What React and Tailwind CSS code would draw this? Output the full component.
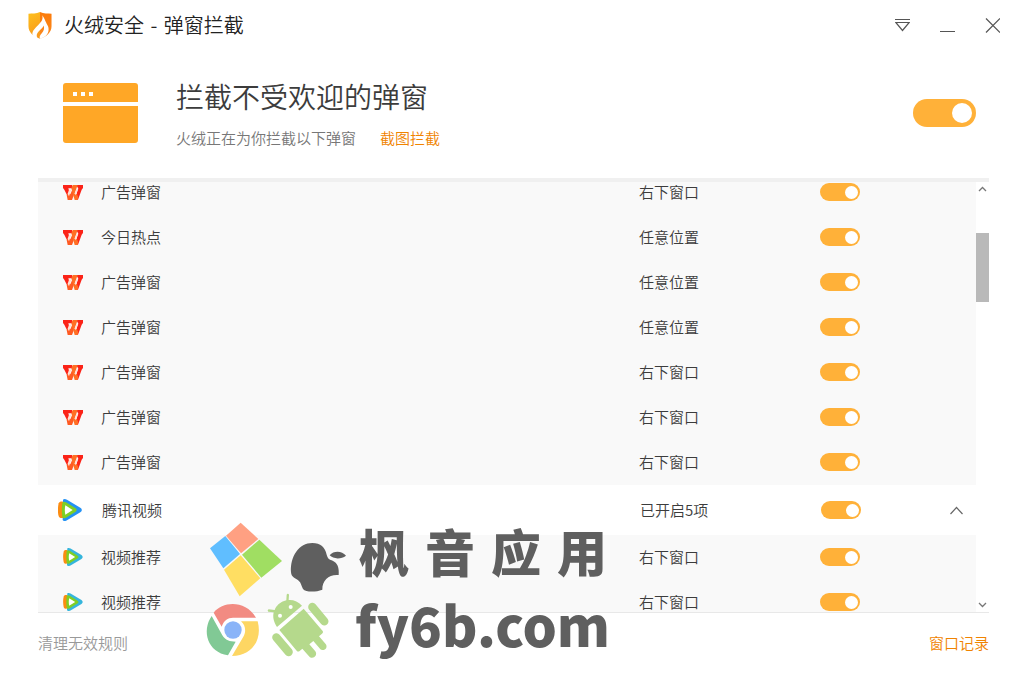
import { useState } from "react";

const Shield = () => (
  <svg viewBox="0 0 72 82" className="h-[27px] w-6 shrink-0" aria-hidden="true">
    <defs>
      <linearGradient id="shieldLeft" x1="0" y1="0" x2="0.3" y2="1">
        <stop offset="0" stopColor="#fdc11d" />
        <stop offset="1" stopColor="#f99a1c" />
      </linearGradient>
      <linearGradient id="shieldRight" x1="0" y1="0" x2="0" y2="1">
        <stop offset="0" stopColor="#fb7a0a" />
        <stop offset="1" stopColor="#fb8a1e" />
      </linearGradient>
    </defs>
    <path d="M36 0C25 5 12 5 1 5v38c0 19 15 31 35 38z" fill="url(#shieldLeft)" />
    <path d="M36 0c11 5 24 5 35 5v38c0 19-15 31-35 38z" fill="url(#shieldRight)" />
    <path d="M43 10c3 14-3 20-13 30-11 11-18 18-17 28 2 6 9 11 16 13-5-9-4-15 4-23 7-7 12-11 14-17 3 9 1 16-5 23-6 7-9 11-6 18 14-4 25-13 26-27 1-11-4-14-7-22-4-8-6-15-12-23z" fill="#fff" />
  </svg>
);

const WindowIcon = () => (
  <svg viewBox="0 0 75 60" className="h-[60px] w-[75px] shrink-0" fill="#ffa726" aria-hidden="true">
    <path d="M3 0h69a3 3 0 0 1 3 3v16H0V3a3 3 0 0 1 3-3z" />
    <path d="M0 23h75v34a3 3 0 0 1-3 3H3a3 3 0 0 1-3-3z" />
    <path d="M10 9h4v4h-4zM18 9h4v4h-4zM26 9h4v4h-4z" fill="#fff" />
  </svg>
);

const WpsIcon = () => (
  <svg viewBox="0 0 60 45" className="h-[15px] w-5" aria-hidden="true">
    <path d="M0 0h27v10H16l6 20-4 12L4 14l-4-5z" fill="#fb2318" />
    <path d="M40 0h20v9l-4 5-11 30h-7l4-22 4-11z" fill="#fb2318" />
    <path d="M22 28l8-19h8l-2 12-9 24H14l-3-15 6-8z" fill="#ff5a22" />
    <path d="M29 0h15l-4 11-5 14 7 3 4 9-3 8h-8l-6-22-4-13z" fill="#ff6f24" />
    <path d="M18 14h7l-7 20-4-8z" fill="#ffe0d4" />
    <path d="M40 13h5l-7 18-3-6z" fill="#ffe0d4" />
  </svg>
);

const TencentIcon = ({ small }) => (
  <svg viewBox="0 0 72 66" className={small ? "h-[18px] w-5" : "h-[22px] w-6"} aria-hidden="true">
    <path d="M15 2c3-3 8-2 12 0l40 24c6 4 6 10 0 14L27 64c-5 3-10 3-13-1z" fill={small ? "#35b5dc" : "#2492f5"} />
    <path d="M2 13c2-5 7-6 13-5v49c-6 1-11 0-13-5-3-11-3-28 0-39z" fill="#fb8c12" />
    <path d="M13 12c2-5 6-5 11-2l29 18c4 3 4 7 0 10L24 56c-5 3-9 3-11-2-2-12-2-30 0-42z" fill="#7fce25" />
    <path d="M22 19l22 14-22 14c-2-8-2-20 0-28z" fill="#fff" />
  </svg>
);

const Toggle = ({ label, large }) => (
  <input
    type="checkbox"
    role="switch"
    defaultChecked
    aria-label={label}
    className={
      large
        ? "flex h-7 w-[63px] shrink-0 cursor-pointer appearance-none items-center rounded-full bg-[#cccccc] px-1 before:size-5 before:rounded-full before:bg-white checked:justify-end checked:bg-[#ffb139]"
        : "flex h-[18px] w-10 shrink-0 cursor-pointer appearance-none items-center rounded-full bg-[#cccccc] px-0.5 before:size-[13px] before:rounded-full before:bg-white checked:justify-end checked:bg-[#ffb139]"
    }
  />
);

const RuleRow = ({ icon, name, position }) => (
  <li className="grid h-[45px] shrink-0 grid-cols-[63px_1fr_181px_156px] items-center bg-[#f9f9f9] pb-px">
    <span className="pl-[25px]">{icon}</span>
    <span>{name}</span>
    <span>{position}</span>
    <Toggle label={name} />
  </li>
);

const Logos = () => (
  <svg viewBox="0 0 480 450" className="h-[150px] w-40 shrink-0" aria-hidden="true">
    <g>
      <path d="M137 23l53 49-52 43-45-53z" fill="#ffa082" />
      <path d="M91 63l44 54-50 43-40-60z" fill="#60beff" />
      <path d="M193 74l68 64-62 50-58-69z" fill="#a0de62" />
      <path d="M137 121l59 69-62 54-47-80z" fill="#ffde62" />
    </g>
    <g fill="#5f5f5f">
      <path d="M352 84c25 0 38 13 43 35 3 12 9 15 18 18 14 6 20 20 18 43-28-3-50 15-49 44-20 8-50 8-58-2-5-9-5-18-13-25-9-7-22-9-23-25-3-48 24-88 64-88z" />
      <path d="M404 121c12-14 36-14 49 1-14 11-38 11-49-1z" />
    </g>
    <g>
      <path d="M56 293c28-35 95-38 127 15h-69c-16 0-28 9-34 27z" fill="#f28b82" />
      <path d="M50 303l32 58c9 15 22 19 40 19l-23 41c-61-9-80-73-49-118z" fill="#81c995" />
      <path d="M138 319h50c15 55-17 103-77 104l34-58c9-15 7-34-7-46z" fill="#fdd663" />
      <circle cx="114" cy="345" r="26" fill="#8ab4f8" />
    </g>
    <g fill="#b5d98c">
      <path d="M246 336c-11-16-13-31-10-44l-16-2c-3-2-2-6 1-7l18 2c5-13 16-24 35-29l1-17c1-4 6-4 7 0l-1 16c15-1 29 5 40 17z" />
      <path d="M253 345l73-64 57 67c2 3 1 6-3 9l-8 7 20 23c9 12-7 25-17 14l-20-23-12 10 18 21c9 13-9 27-19 15l-20-23-8 7c-4 3-6 2-9-1z" />
      <path d="M244 367l37 44" fill="none" stroke="#b5d98c" strokeWidth="25" strokeLinecap="round" />
      <path d="M352 276l36 43" fill="none" stroke="#b5d98c" strokeWidth="25" strokeLinecap="round" />
      <circle cx="255" cy="302" r="6" fill="#fff" />
      <circle cx="287" cy="276" r="6" fill="#fff" />
    </g>
  </svg>
);

const rules = [
  { name: "广告弹窗", position: "右下窗口" },
  { name: "今日热点", position: "任意位置" },
  { name: "广告弹窗", position: "任意位置" },
  { name: "广告弹窗", position: "任意位置" },
  { name: "广告弹窗", position: "右下窗口" },
  { name: "广告弹窗", position: "右下窗口" },
  { name: "广告弹窗", position: "右下窗口" },
];

const videoRules = [
  { name: "视频推荐", position: "右下窗口" },
  { name: "视频推荐", position: "右下窗口" },
];

const App = () => {
  const [open, setOpen] = useState(true);

  return (
    <div className="relative flex h-screen flex-col bg-white font-['Noto_Sans_CJK_SC',sans-serif] text-[15px] font-[350] text-[#3c3c3c]">
      <header className="flex h-[50px] shrink-0 items-center justify-between pr-[27px] pl-7">
        <div className="flex items-center gap-3">
          <Shield />
          <h1 className="text-xl leading-7 text-[#222222]">
            火绒安全 <span className="mx-0.5">-</span> 弹窗拦截
          </h1>
        </div>
        <div className="flex items-center gap-[30px] text-[#555555]">
          <button type="button" aria-label="菜单">
            <svg viewBox="0 0 15 15" className="size-[15px]" fill="none" stroke="currentColor" strokeWidth="1.2">
              <path d="M0 1.5h15M0.8 4.5h13.4L7.5 12.5z" />
            </svg>
          </button>
          <button type="button" aria-label="最小化">
            <svg viewBox="0 0 15 15" className="size-[15px]" fill="none" stroke="currentColor">
              <path d="M0 13.5h15" />
            </svg>
          </button>
          <button type="button" aria-label="关闭">
            <svg viewBox="0 0 15 15" className="size-[15px]" fill="none" stroke="currentColor" strokeWidth="1.2">
              <path d="M1 0.5l14 14M15 0.5l-14 14" />
            </svg>
          </button>
        </div>
      </header>

      <section className="flex h-32 shrink-0 items-center gap-[38px] pr-[51px] pb-0.5 pl-[63px]">
        <WindowIcon />
        <div className="flex-1">
          <h2 className="text-[28px] leading-10">拦截不受欢迎的弹窗</h2>
          <p className="mt-2.5 flex gap-6 leading-6 text-[#777777]">
            <span>火绒正在为你拦截以下弹窗</span>
            <a href="#capture" className="text-[#f08300]">截图拦截</a>
          </p>
        </div>
        <Toggle label="弹窗拦截" large />
      </section>

      <main className="mx-[38px] flex min-h-0 flex-1 border-t-4 border-b border-t-[#f0f0f0] border-b-[#e8e8e8]">
        <div className="min-w-0 flex-1 overflow-hidden">
          <ul className="-mt-3">
            {rules.map((rule, index) => (
              <RuleRow key={index} icon={<WpsIcon />} {...rule} />
            ))}
            <li className="grid h-[50px] grid-cols-[64px_1fr_181px_129px_26px] items-center">
              <span className="pl-5"><TencentIcon /></span>
              <span>腾讯视频</span>
              <span>已开启5项</span>
              <Toggle label="腾讯视频" />
              <button type="button" aria-label="展开" onClick={() => setOpen(!open)}>
                <svg viewBox="0 0 13 13" className="size-[13px]" fill="none" stroke="#666666" strokeWidth="1.2">
                  <path d={open ? "M0.5 10l6-6.5l6 6.5" : "M0.5 3.5l6 6.5l6-6.5"} />
                </svg>
              </button>
            </li>
            {open &&
              videoRules.map((rule, index) => (
                <RuleRow key={index} icon={<TencentIcon small />} {...rule} />
              ))}
          </ul>
        </div>

        {/* scroll bar */}
        <div className="flex w-[13px] shrink-0 flex-col items-center">
          <svg viewBox="0 0 13 15" className="h-[15px] w-[13px] shrink-0" fill="none" stroke="#777777" strokeWidth="1.3">
            <path d="M3 9l3.5-3.5L10 9" />
          </svg>
          <div className="mt-9 h-[69px] w-full bg-[#b9b9b9]" />
          <svg viewBox="0 0 13 15" className="mt-auto h-[15px] w-[13px] shrink-0" fill="none" stroke="#777777" strokeWidth="1.3">
            <path d="M3 6l3.5 3.5L10 6" />
          </svg>
        </div>
      </main>

      <footer className="flex h-[62px] shrink-0 items-center justify-between px-[38px] pb-0.5">
        <button type="button" className="text-[#999999]">清理无效规则</button>
        <a href="#records" className="text-[#f08300]">窗口记录</a>
      </footer>

      {/* watermark */}
      <div className="pointer-events-none absolute bottom-2.5 left-[195px] flex font-black text-[#5f5f5f]">
        <Logos />
        <div className="w-[252px]">
          <div className="flex justify-between pl-1 text-[50px] leading-[70px]">
            <span>枫</span>
            <span>音</span>
            <span>应</span>
            <span>用</span>
          </div>
          <div className="text-[54px] leading-[78px]">fy6b.com</div>
        </div>
      </div>
    </div>
  );
};

export default App;
